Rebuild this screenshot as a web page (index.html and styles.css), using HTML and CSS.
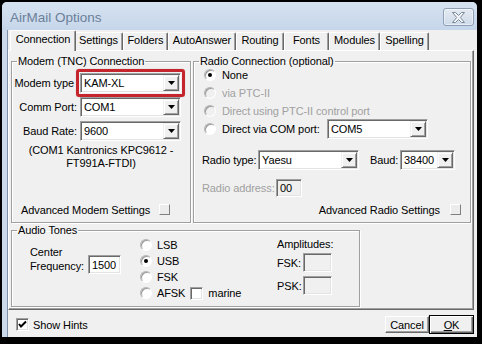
FILE: index.html
```html
<!DOCTYPE html>
<html>
<head>
<meta charset="utf-8">
<title>AirMail Options</title>
<link rel="stylesheet" href="styles.css">
</head>
<body>
<div class="window">
  <div class="titlebar">
    <span class="title">AirMail Options</span>
    <div class="close">
      <svg width="13" height="11" viewBox="0 0 13 11"><polygon points="0.5,0.5 3.5,0.5 6.5,3.5 9.5,0.5 12.5,0.5 8.3,5.5 12.5,10.5 9.5,10.5 6.5,7.5 3.5,10.5 0.5,10.5 4.7,5.5" fill="#f3f6fa" stroke="#7c8898" stroke-width="1" stroke-linejoin="round"/></svg>
    </div>
  </div>
  <div class="client">
    <div class="tabs">
      <div class="tab sel t1">Connection</div>
      <div class="tab t2">Settings</div>
      <div class="tab t3">Folders</div>
      <div class="tab t4">AutoAnswer</div>
      <div class="tab t5">Routing</div>
      <div class="tab t6">Fonts</div>
      <div class="tab t7">Modules</div>
      <div class="tab t8">Spelling</div>
    </div>
    <div class="panel">
      <div class="toprow">
        <fieldset class="group modem">
          <legend>Modem (TNC) Connection</legend>
          <div class="frow first">
            <span class="lbl lbl-mt">Modem type</span>
            <div class="combo">
              <span class="val">KAM-XL</span>
              <span class="drop"><svg width="7" height="4" viewBox="0 0 7 4"><polygon points="0,0 7,0 3.5,4" fill="#000"/></svg></span>
              <span class="highlight"></span>
            </div>
          </div>
          <div class="frow">
            <span class="lbl">Comm Port:</span>
            <div class="combo">
              <span class="val">COM1</span>
              <span class="drop"><svg width="7" height="4" viewBox="0 0 7 4"><polygon points="0,0 7,0 3.5,4" fill="#000"/></svg></span>
            </div>
          </div>
          <div class="frow">
            <span class="lbl">Baud Rate:</span>
            <div class="combo">
              <span class="val">9600</span>
              <span class="drop"><svg width="7" height="4" viewBox="0 0 7 4"><polygon points="0,0 7,0 3.5,4" fill="#000"/></svg></span>
            </div>
          </div>
          <div class="info">(COM1 Kantronics KPC9612 -<br>FT991A-FTDI)</div>
          <div class="adv adv-modem">
            <span>Advanced Modem Settings</span>
            <span class="sqbtn"></span>
          </div>
        </fieldset>
        <fieldset class="group radio">
          <legend>Radio Connection (optional)</legend>
          <div class="ropt"><span class="rb on"></span><span class="rtext">None</span></div>
          <div class="ropt dis"><span class="rb"></span><span class="rtext">via PTC-II</span></div>
          <div class="ropt dis"><span class="rb"></span><span class="rtext">Direct using PTC-II control port</span></div>
          <div class="ropt"><span class="rb"></span><span class="rtext rtext-com">Direct via COM port:</span>
            <div class="combo">
              <span class="val">COM5</span>
              <span class="drop"><svg width="7" height="4" viewBox="0 0 7 4"><polygon points="0,0 7,0 3.5,4" fill="#000"/></svg></span>
            </div>
          </div>
          <div class="frow rtype">
            <span class="lbl2 lbl-rt">Radio type:</span>
            <div class="combo">
              <span class="val">Yaesu</span>
              <span class="drop"><svg width="7" height="4" viewBox="0 0 7 4"><polygon points="0,0 7,0 3.5,4" fill="#000"/></svg></span>
            </div>
            <span class="lbl2 lbl-baud">Baud:</span>
            <div class="combo combo-baud">
              <span class="val">38400</span>
              <span class="drop"><svg width="7" height="4" viewBox="0 0 7 4"><polygon points="0,0 7,0 3.5,4" fill="#000"/></svg></span>
            </div>
          </div>
          <div class="frow raddr">
            <span class="lbl2 lbl-ra">Radio address:</span>
            <div class="edit edit-ra disabled">00</div>
          </div>
          <div class="adv adv-radio">
            <span>Advanced Radio Settings</span>
            <span class="sqbtn"></span>
          </div>
        </fieldset>
      </div>
      <fieldset class="group audio">
        <legend>Audio Tones</legend>
        <div class="audio-body">
          <div class="freq">
            <div class="freq-label">Center<br>Frequency:</div>
            <div class="edit edit-freq">1500</div>
          </div>
          <div class="modes">
            <div class="mopt"><span class="rb"></span><span class="mtext">LSB</span></div>
            <div class="mopt"><span class="rb on"></span><span class="mtext">USB</span></div>
            <div class="mopt"><span class="rb"></span><span class="mtext">FSK</span></div>
            <div class="mopt"><span class="rb"></span><span class="mtext">AFSK</span><span class="cb cb-marine"></span><span class="mtext">marine</span></div>
          </div>
          <div class="amps">
            <div class="amp-title">Amplitudes:</div>
            <div class="amp-row first"><span class="amp-lbl">FSK:</span><div class="edit edit-amp disabled"></div></div>
            <div class="amp-row"><span class="amp-lbl">PSK:</span><div class="edit edit-amp disabled"></div></div>
          </div>
        </div>
      </fieldset>
    </div>
    <div class="footer">
      <span class="cb checked"><svg width="9" height="9" viewBox="0 0 9 9"><polyline points="1,4 3,6.5 8,1.5" fill="none" stroke="#000" stroke-width="2"/></svg></span>
      <span class="hints">Show Hints</span>
      <div class="buttons">
        <div class="btn btn-cancel">Cancel</div>
        <div class="btn btn-ok"><u>O</u>K</div>
      </div>
    </div>
  </div>
</div>
</body>
</html>
```

FILE: styles.css
```css
* { box-sizing: border-box; }
html, body { margin: 0; padding: 0; }
body {
  background: #000;
  width: 482px;
  height: 344px;
  overflow: hidden;
  font-family: "Liberation Sans", Arial, sans-serif;
  font-size: 11px;
  letter-spacing: -0.1px;
  color: #000;
}
.window {
  margin: 2px 0 0 2px;
  width: 475px;
  height: 335px;
  background: #cbd9ea;
  border-radius: 5px 5px 0 0;
  display: flex;
  flex-direction: column;
}
.titlebar {
  height: 28px;
  display: flex;
  align-items: flex-start;
  justify-content: space-between;
  background: linear-gradient(#d6e2f0, #c6d6ea);
  border-radius: 5px 5px 0 0;
}
.title {
  margin: 8px 0 0 8px;
  font-size: 13.5px;
  letter-spacing: 0;
  line-height: 16px;
  color: #6b8099;
}
.close {
  margin: 6px 3px 0 0;
  width: 31px;
  height: 18px;
  border: 1px solid #8e9fb5;
  border-radius: 3px;
  background: linear-gradient(#e3eaf3, #cfdbea);
  box-shadow: inset 0 0 0 1px rgba(255,255,255,0.5);
  display: flex;
  align-items: center;
  justify-content: center;
}
.client {
  flex: 1;
  margin-left: 5px;
  background: #f0f0f0;
  border-left: 1px solid #7f91a8;
  display: flex;
  flex-direction: column;
}
.tabs {
  display: flex;
  align-items: flex-end;
  height: 21px;
  padding-left: 4px;
  margin-bottom: -1px;
  position: relative;
  z-index: 2;
}
.tab {
  height: 18px;
  margin-bottom: 1px;
  padding-top: 1px;
  line-height: 13px;
  text-align: center;
  background: #f0f0f0;
  border-top: 1px solid #fff;
  border-left: 1px solid #fff;
  border-right: 1px solid #696969;
  border-radius: 2px 2px 0 0;
  box-shadow: inset -1px 0 0 #a0a0a0;
  white-space: nowrap;
}
.t1 { width: 62px; }
.t2 { width: 49px; }
.t3 { width: 45px; }
.t4 { width: 68px; }
.t5 { width: 48px; }
.t6 { width: 45px; }
.t7 { width: 51px; }
.t8 { width: 49px; }
.tab.sel {
  height: 21px;
  margin: 0 -2px 0 -2px;
  width: 66px;
  padding-top: 2px;
  position: relative;
  z-index: 3;
}
.panel {
  width: 466px;
  height: 260px;
  border-top: 1px solid #fff;
  border-left: 1px solid #fff;
  border-right: 1px solid #696969;
  border-bottom: 1px solid #696969;
  box-shadow: inset -1px -1px 0 #a0a0a0;
  padding: 4px 0 0 2px;
  position: relative;
  z-index: 1;
}
.toprow {
  display: flex;
  gap: 2px;
}
.group {
  margin: 0;
  padding: 0;
  min-width: 0;
  border: 1px solid #a0a0a0;
  box-shadow: inset 1px 1px 0 #fff, 1px 1px 0 #fff;
}
.group legend {
  margin-left: 5px;
  padding: 0 1px;
  line-height: 13px;
}
.modem { width: 180px; height: 168px; }
.radio { width: 278px; height: 168px; }
.audio { width: 349px; height: 83px; margin-top: 1px; }

.frow {
  display: flex;
  align-items: center;
  height: 20px;
  margin-top: 4px;
}
.frow.first { margin-top: 5px; }
.lbl {
  width: 65px;
  text-align: right;
  white-space: nowrap;
}
.lbl-mt { padding-right: 3px; }
.combo {
  position: relative;
  width: 101px;
  height: 20px;
  margin-left: 3px;
  background: #fff;
  border: 1px solid;
  border-color: #a0a0a0 #fff #fff #a0a0a0;
  box-shadow: inset 1px 1px 0 #696969, inset -1px -1px 0 #e3e3e3;
  display: flex;
  align-items: center;
  padding-left: 3px;
}
.combo .val { flex: 1; white-space: nowrap; }
.drop {
  width: 16px;
  height: 16px;
  margin-right: 1px;
  background: #f0f0f0;
  border: 1px solid;
  border-color: #f0f0f0 #696969 #696969 #f0f0f0;
  box-shadow: inset 1px 1px 0 #fff, inset -1px -1px 0 #a0a0a0;
  display: flex;
  align-items: center;
  justify-content: center;
}
.highlight {
  position: absolute;
  top: -5px;
  left: -5px;
  right: -5px;
  bottom: -5px;
  border: 3px solid #c5262d;
  border-radius: 3px;
  box-shadow: 0 0 1px rgba(120,0,0,0.4);
  pointer-events: none;
}
.info {
  margin-top: 3px;
  text-align: center;
  line-height: 13px;
}
.adv {
  display: flex;
  align-items: center;
  height: 13px;
  white-space: nowrap;
}
.adv-modem {
  margin-top: 33px;
  padding-left: 9px;
  gap: 9px;
}
.adv-radio {
  margin-top: 6px;
  justify-content: flex-end;
  padding-right: 9px;
  gap: 10px;
}
.sqbtn {
  width: 11px;
  height: 11px;
  background: #ececec;
  border: 1px solid;
  border-color: #fff #808080 #808080 #fff;
}

.ropt {
  display: flex;
  align-items: center;
  height: 14px;
  margin-top: 4px;
  padding-left: 10px;
}
.ropt:first-of-type { margin-top: 0; }
.rb {
  position: relative;
  flex: none;
  width: 12px;
  height: 12px;
  border-radius: 50%;
  background: #fff;
  border: 1px solid;
  border-color: #b4b4b4 #fff #fff #b4b4b4;
  box-shadow: inset 1px 1px 0 #9a9a9a;
}
.rb.on::after {
  content: "";
  position: absolute;
  left: 3px;
  top: 3px;
  width: 4px;
  height: 4px;
  border-radius: 50%;
  background: #000;
}
.dis .rb { background: #f0f0f0; }
.dis .rtext { color: #a0a0a0; }
.rtext { margin-left: 6px; white-space: nowrap; }
.rtext-com { width: 105px; flex: none; }
.rtext-com + .combo { margin-left: 0; }

.rtype { margin-top: 14px; padding-left: 8px; }
.lbl2 { white-space: nowrap; flex: none; }
.lbl-rt { width: 56px; }
.rtype .combo { margin-left: 0; }
.lbl-baud { width: 30px; margin-left: 11px; }
.combo-baud { width: 55px; }
.raddr { margin-top: 9px; height: 18px; padding-left: 8px; }
.lbl-ra { width: 74px; color: #a0a0a0; }

.edit {
  background: #fff;
  border: 1px solid;
  border-color: #a0a0a0 #fff #fff #a0a0a0;
  box-shadow: inset 1px 1px 0 #696969, inset -1px -1px 0 #e3e3e3;
  padding: 0 0 0 3px;
  display: flex;
  align-items: center;
  white-space: nowrap;
}
.edit.disabled { background: #f0f0f0; }
.edit-ra { width: 26px; height: 18px; }

.audio-body { display: flex; align-items: flex-start; }
.freq {
  width: 128px;
  padding: 8px 0 0 18px;
  display: flex;
  align-items: flex-end;
}
.freq-label { line-height: 14px; margin-bottom: 1px; white-space: nowrap; }
.edit-freq { width: 33px; height: 19px; margin-left: 4px; }
.modes { width: 137px; }
.mopt {
  display: flex;
  align-items: center;
  height: 16px;
}
.mtext { margin-left: 5px; }
.cb {
  flex: none;
  width: 13px;
  height: 13px;
  background: #fff;
  border: 1px solid;
  border-color: #a0a0a0 #fff #fff #a0a0a0;
  box-shadow: inset 1px 1px 0 #696969, inset -1px -1px 0 #e3e3e3;
  display: flex;
  align-items: center;
  justify-content: center;
}
.cb-marine { margin-left: 5px; }
.amps { padding-top: 1px; }
.amp-title { line-height: 13px; }
.amp-row {
  display: flex;
  align-items: center;
  height: 19px;
  margin-top: 4px;
}
.amp-row.first { margin-top: 2px; }
.amp-lbl { width: 26px; }
.edit-amp { width: 29px; height: 19px; }

.footer {
  height: 27px;
  display: flex;
  align-items: center;
  padding: 2px 3px 0 8px;
}
.hints { margin-left: 4px; }
.buttons {
  margin-left: auto;
  display: flex;
  align-items: center;
}
.btn {
  background: #f0f0f0;
  text-align: center;
  display: flex;
  align-items: center;
  justify-content: center;
}
.btn-cancel {
  width: 44px;
  height: 17px;
  border: 1px solid;
  border-color: #fff #696969 #696969 #fff;
  box-shadow: inset -1px -1px 0 #a0a0a0;
}
.btn-ok {
  width: 45px;
  height: 19px;
  border: 1px solid #000;
  box-shadow: inset 1px 1px 0 #fff, inset -1px -1px 0 #696969, inset -2px -2px 0 #a0a0a0;
}
```
